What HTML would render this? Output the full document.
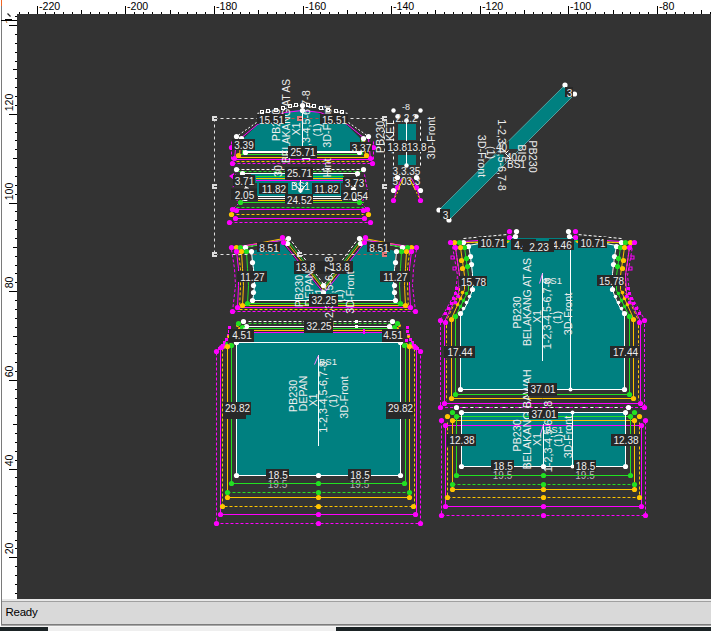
<!DOCTYPE html>
<html><head><meta charset="utf-8"><style>
html,body{margin:0;padding:0;width:711px;height:631px;overflow:hidden;background:#fff;}
.abs{position:absolute;left:0;top:0;}
.rl{font-family:"Liberation Sans",sans-serif;font-size:10.6px;}
.rl2{font-family:"Liberation Sans",sans-serif;font-size:10.6px;}
#cv{position:absolute;left:17px;top:14px;width:694px;height:585px;background:#333333;overflow:hidden;}
#st{position:absolute;left:1px;top:599px;width:710px;height:28px;}
</style></head><body>
<div id="cv"></div>
<svg class="abs" width="711" height="631" viewBox="0 0 711 631"><g stroke="#000" stroke-width="1" shape-rendering="crispEdges"><line x1="19.5" y1="12" x2="19.5" y2="14" /><line x1="28.5" y1="12" x2="28.5" y2="14" /><line x1="37.5" y1="6" x2="37.5" y2="14" /><line x1="45.5" y1="12" x2="45.5" y2="14" /><line x1="54.5" y1="12" x2="54.5" y2="14" /><line x1="63.5" y1="12" x2="63.5" y2="14" /><line x1="72.5" y1="12" x2="72.5" y2="14" /><line x1="81.5" y1="10" x2="81.5" y2="14" /><line x1="90.5" y1="12" x2="90.5" y2="14" /><line x1="99.5" y1="12" x2="99.5" y2="14" /><line x1="108.5" y1="12" x2="108.5" y2="14" /><line x1="116.5" y1="12" x2="116.5" y2="14" /><line x1="125.5" y1="6" x2="125.5" y2="14" /><line x1="134.5" y1="12" x2="134.5" y2="14" /><line x1="143.5" y1="12" x2="143.5" y2="14" /><line x1="152.5" y1="12" x2="152.5" y2="14" /><line x1="161.5" y1="12" x2="161.5" y2="14" /><line x1="170.5" y1="10" x2="170.5" y2="14" /><line x1="178.5" y1="12" x2="178.5" y2="14" /><line x1="187.5" y1="12" x2="187.5" y2="14" /><line x1="196.5" y1="12" x2="196.5" y2="14" /><line x1="205.5" y1="12" x2="205.5" y2="14" /><line x1="214.5" y1="6" x2="214.5" y2="14" /><line x1="223.5" y1="12" x2="223.5" y2="14" /><line x1="232.5" y1="12" x2="232.5" y2="14" /><line x1="240.5" y1="12" x2="240.5" y2="14" /><line x1="249.5" y1="12" x2="249.5" y2="14" /><line x1="258.5" y1="10" x2="258.5" y2="14" /><line x1="267.5" y1="12" x2="267.5" y2="14" /><line x1="276.5" y1="12" x2="276.5" y2="14" /><line x1="285.5" y1="12" x2="285.5" y2="14" /><line x1="294.5" y1="12" x2="294.5" y2="14" /><line x1="303.5" y1="6" x2="303.5" y2="14" /><line x1="311.5" y1="12" x2="311.5" y2="14" /><line x1="320.5" y1="12" x2="320.5" y2="14" /><line x1="329.5" y1="12" x2="329.5" y2="14" /><line x1="338.5" y1="12" x2="338.5" y2="14" /><line x1="347.5" y1="10" x2="347.5" y2="14" /><line x1="356.5" y1="12" x2="356.5" y2="14" /><line x1="365.5" y1="12" x2="365.5" y2="14" /><line x1="373.5" y1="12" x2="373.5" y2="14" /><line x1="382.5" y1="12" x2="382.5" y2="14" /><line x1="391.5" y1="6" x2="391.5" y2="14" /><line x1="400.5" y1="12" x2="400.5" y2="14" /><line x1="409.5" y1="12" x2="409.5" y2="14" /><line x1="418.5" y1="12" x2="418.5" y2="14" /><line x1="427.5" y1="12" x2="427.5" y2="14" /><line x1="435.5" y1="10" x2="435.5" y2="14" /><line x1="444.5" y1="12" x2="444.5" y2="14" /><line x1="453.5" y1="12" x2="453.5" y2="14" /><line x1="462.5" y1="12" x2="462.5" y2="14" /><line x1="471.5" y1="12" x2="471.5" y2="14" /><line x1="480.5" y1="6" x2="480.5" y2="14" /><line x1="489.5" y1="12" x2="489.5" y2="14" /><line x1="498.5" y1="12" x2="498.5" y2="14" /><line x1="506.5" y1="12" x2="506.5" y2="14" /><line x1="515.5" y1="12" x2="515.5" y2="14" /><line x1="524.5" y1="10" x2="524.5" y2="14" /><line x1="533.5" y1="12" x2="533.5" y2="14" /><line x1="542.5" y1="12" x2="542.5" y2="14" /><line x1="551.5" y1="12" x2="551.5" y2="14" /><line x1="560.5" y1="12" x2="560.5" y2="14" /><line x1="568.5" y1="6" x2="568.5" y2="14" /><line x1="577.5" y1="12" x2="577.5" y2="14" /><line x1="586.5" y1="12" x2="586.5" y2="14" /><line x1="595.5" y1="12" x2="595.5" y2="14" /><line x1="604.5" y1="12" x2="604.5" y2="14" /><line x1="613.5" y1="10" x2="613.5" y2="14" /><line x1="622.5" y1="12" x2="622.5" y2="14" /><line x1="630.5" y1="12" x2="630.5" y2="14" /><line x1="639.5" y1="12" x2="639.5" y2="14" /><line x1="648.5" y1="12" x2="648.5" y2="14" /><line x1="657.5" y1="6" x2="657.5" y2="14" /><line x1="666.5" y1="12" x2="666.5" y2="14" /><line x1="675.5" y1="12" x2="675.5" y2="14" /><line x1="684.5" y1="12" x2="684.5" y2="14" /><line x1="693.5" y1="12" x2="693.5" y2="14" /><line x1="701.5" y1="10" x2="701.5" y2="14" /><line x1="710.5" y1="12" x2="710.5" y2="14" /><line x1="15" y1="16.5" x2="17" y2="16.5" /><line x1="9" y1="25.5" x2="17" y2="25.5" /><line x1="15" y1="34.5" x2="17" y2="34.5" /><line x1="15" y1="43.5" x2="17" y2="43.5" /><line x1="15" y1="52.5" x2="17" y2="52.5" /><line x1="15" y1="61.5" x2="17" y2="61.5" /><line x1="13" y1="69.5" x2="17" y2="69.5" /><line x1="15" y1="78.5" x2="17" y2="78.5" /><line x1="15" y1="87.5" x2="17" y2="87.5" /><line x1="15" y1="96.5" x2="17" y2="96.5" /><line x1="15" y1="105.5" x2="17" y2="105.5" /><line x1="9" y1="114.5" x2="17" y2="114.5" /><line x1="15" y1="123.5" x2="17" y2="123.5" /><line x1="15" y1="132.5" x2="17" y2="132.5" /><line x1="15" y1="140.5" x2="17" y2="140.5" /><line x1="15" y1="149.5" x2="17" y2="149.5" /><line x1="13" y1="158.5" x2="17" y2="158.5" /><line x1="15" y1="167.5" x2="17" y2="167.5" /><line x1="15" y1="176.5" x2="17" y2="176.5" /><line x1="15" y1="185.5" x2="17" y2="185.5" /><line x1="15" y1="194.5" x2="17" y2="194.5" /><line x1="9" y1="203.5" x2="17" y2="203.5" /><line x1="15" y1="211.5" x2="17" y2="211.5" /><line x1="15" y1="220.5" x2="17" y2="220.5" /><line x1="15" y1="229.5" x2="17" y2="229.5" /><line x1="15" y1="238.5" x2="17" y2="238.5" /><line x1="13" y1="247.5" x2="17" y2="247.5" /><line x1="15" y1="256.5" x2="17" y2="256.5" /><line x1="15" y1="265.5" x2="17" y2="265.5" /><line x1="15" y1="273.5" x2="17" y2="273.5" /><line x1="15" y1="282.5" x2="17" y2="282.5" /><line x1="9" y1="291.5" x2="17" y2="291.5" /><line x1="15" y1="300.5" x2="17" y2="300.5" /><line x1="15" y1="309.5" x2="17" y2="309.5" /><line x1="15" y1="318.5" x2="17" y2="318.5" /><line x1="15" y1="327.5" x2="17" y2="327.5" /><line x1="13" y1="336.5" x2="17" y2="336.5" /><line x1="15" y1="344.5" x2="17" y2="344.5" /><line x1="15" y1="353.5" x2="17" y2="353.5" /><line x1="15" y1="362.5" x2="17" y2="362.5" /><line x1="15" y1="371.5" x2="17" y2="371.5" /><line x1="9" y1="380.5" x2="17" y2="380.5" /><line x1="15" y1="389.5" x2="17" y2="389.5" /><line x1="15" y1="398.5" x2="17" y2="398.5" /><line x1="15" y1="407.5" x2="17" y2="407.5" /><line x1="15" y1="415.5" x2="17" y2="415.5" /><line x1="13" y1="424.5" x2="17" y2="424.5" /><line x1="15" y1="433.5" x2="17" y2="433.5" /><line x1="15" y1="442.5" x2="17" y2="442.5" /><line x1="15" y1="451.5" x2="17" y2="451.5" /><line x1="15" y1="460.5" x2="17" y2="460.5" /><line x1="9" y1="469.5" x2="17" y2="469.5" /><line x1="15" y1="477.5" x2="17" y2="477.5" /><line x1="15" y1="486.5" x2="17" y2="486.5" /><line x1="15" y1="495.5" x2="17" y2="495.5" /><line x1="15" y1="504.5" x2="17" y2="504.5" /><line x1="13" y1="513.5" x2="17" y2="513.5" /><line x1="15" y1="522.5" x2="17" y2="522.5" /><line x1="15" y1="531.5" x2="17" y2="531.5" /><line x1="15" y1="540.5" x2="17" y2="540.5" /><line x1="15" y1="548.5" x2="17" y2="548.5" /><line x1="9" y1="557.5" x2="17" y2="557.5" /><line x1="15" y1="566.5" x2="17" y2="566.5" /><line x1="15" y1="575.5" x2="17" y2="575.5" /><line x1="15" y1="584.5" x2="17" y2="584.5" /><line x1="15" y1="593.5" x2="17" y2="593.5" /></g><g fill="#000"><text x="39.0" y="10" class="rl">-220</text><text x="127.0" y="10" class="rl">-200</text><text x="216.0" y="10" class="rl">-180</text><text x="305.0" y="10" class="rl">-160</text><text x="393.0" y="10" class="rl">-140</text><text x="482.0" y="10" class="rl">-120</text><text x="570.0" y="10" class="rl">-100</text><text x="659.0" y="10" class="rl">-80</text><text transform="translate(12.6,111.3) rotate(-90)" class="rl2">120</text><text transform="translate(12.6,200.3) rotate(-90)" class="rl2">100</text><text transform="translate(12.6,288.3) rotate(-90)" class="rl2">80</text><text transform="translate(12.6,377.3) rotate(-90)" class="rl2">60</text><text transform="translate(12.6,466.3) rotate(-90)" class="rl2">40</text><text transform="translate(12.6,554.3) rotate(-90)" class="rl2">20</text></g></svg>
<svg class="abs" width="711" height="631" viewBox="0 0 711 631" style="font-family:'Liberation Sans',sans-serif">
<rect x="237" y="333" width="163" height="142" fill="#008080"/>
<text x="277.5" y="488" text-anchor="middle" font-size="10" fill="#b8b8b8">19.5</text>
<text x="359.5" y="488" text-anchor="middle" font-size="10" fill="#b8b8b8">19.5</text>
<polyline points="248.5,321.5 389.5,321.5" fill="none" stroke="#ffffff" stroke-width="1" stroke-dasharray="3 2"/>
<polyline points="248.5,323.5 393.5,323.5" fill="none" stroke="#22e022" stroke-width="1" stroke-dasharray="3 2"/>
<rect x="248" y="326" width="142" height="1" fill="#ffffff"/>
<rect x="248" y="328" width="149" height="1" fill="#22e022"/>
<rect x="252" y="330" width="132" height="1" fill="#ffc400"/>
<rect x="252" y="332" width="132" height="1" fill="#ff00ff"/>
<rect x="236" y="342" width="165" height="1" fill="#ffffff"/>
<polyline points="216.5,352.5 216.5,523.5 420.5,523.5 420.5,352.5" fill="none" stroke="#ff00ff" stroke-width="1" stroke-dasharray="3 2"/>
<rect x="220" y="349" width="1" height="166" fill="#ff00ff"/>
<rect x="416" y="349" width="1" height="166" fill="#ff00ff"/>
<rect x="220" y="514" width="197" height="1" fill="#ff00ff"/>
<polyline points="222.5,348.5 222.5,506.5 414.5,506.5 414.5,348.5" fill="none" stroke="#ffc400" stroke-width="1" stroke-dasharray="3 2"/>
<rect x="227" y="347" width="1" height="151" fill="#ffc400"/>
<rect x="409" y="347" width="1" height="151" fill="#ffc400"/>
<rect x="227" y="497" width="183" height="1" fill="#ffc400"/>
<rect x="231" y="346" width="1" height="138" fill="#22e022"/>
<rect x="405" y="346" width="1" height="138" fill="#22e022"/>
<rect x="231" y="483" width="175" height="1" fill="#22e022"/>
<rect x="236" y="342" width="1" height="134" fill="#ffffff"/>
<rect x="400" y="342" width="1" height="134" fill="#ffffff"/>
<rect x="236" y="475" width="165" height="1" fill="#ffffff"/>
<polyline points="227.5,492.5 409.5,492.5" fill="none" stroke="#22e022" stroke-width="1" stroke-dasharray="3 2"/>
<polyline points="236.5,342.5 247.5,326.5" fill="none" stroke="#ffffff" stroke-width="1"/>
<polyline points="400.5,342.5 389.5,326.5" fill="none" stroke="#ffffff" stroke-width="1"/>
<rect x="406" y="326" width="3" height="3" fill="#ff00ff"/>
<rect x="228" y="326" width="3" height="3" fill="#ff00ff"/>
<rect x="406" y="330" width="3" height="3" fill="#ff00ff"/>
<rect x="228" y="330" width="3" height="3" fill="#ff00ff"/>
<rect x="407" y="334" width="3" height="3" fill="#ff00ff"/>
<rect x="227" y="334" width="3" height="3" fill="#ff00ff"/>
<rect x="409" y="338" width="3" height="3" fill="#ff00ff"/>
<rect x="225" y="338" width="3" height="3" fill="#ff00ff"/>
<rect x="411" y="341" width="3" height="3" fill="#ff00ff"/>
<rect x="223" y="341" width="3" height="3" fill="#ff00ff"/>
<rect x="413" y="344" width="3" height="3" fill="#ff00ff"/>
<rect x="221" y="344" width="3" height="3" fill="#ff00ff"/>
<rect x="416" y="347" width="3" height="3" fill="#ff00ff"/>
<rect x="218" y="347" width="3" height="3" fill="#ff00ff"/>
<rect x="410" y="344" width="3" height="3" fill="#ff00ff"/>
<rect x="224" y="344" width="3" height="3" fill="#ff00ff"/>
<rect x="405" y="339" width="3" height="3" fill="#ff00ff"/>
<rect x="229" y="339" width="3" height="3" fill="#ff00ff"/>
<circle cx="408.5" cy="336.5" r="1.5" fill="#ffc400"/>
<circle cx="228.5" cy="336.5" r="1.5" fill="#ffc400"/>
<circle cx="406.5" cy="344.5" r="1.5" fill="#ffc400"/>
<circle cx="230.5" cy="344.5" r="1.5" fill="#ffc400"/>
<circle cx="410.5" cy="343.5" r="1.5" fill="#22e022"/>
<circle cx="226.5" cy="343.5" r="1.5" fill="#22e022"/>
<circle cx="413.5" cy="347.5" r="1.5" fill="#ffc400"/>
<circle cx="223.5" cy="347.5" r="1.5" fill="#ffc400"/>
<circle cx="399.5" cy="325.5" r="1.5" fill="#ffc400"/>
<circle cx="237.5" cy="325.5" r="1.5" fill="#ffc400"/>
<circle cx="397.5" cy="328.5" r="1.5" fill="#ffc400"/>
<circle cx="239.5" cy="328.5" r="1.5" fill="#ffc400"/>
<circle cx="236.5" cy="475.5" r="2.6" fill="#ffffff"/>
<circle cx="318.5" cy="475.5" r="2.6" fill="#ffffff"/>
<circle cx="400.5" cy="475.5" r="2.6" fill="#ffffff"/>
<circle cx="236.5" cy="342.5" r="2.6" fill="#ffffff"/>
<circle cx="400.5" cy="342.5" r="2.6" fill="#ffffff"/>
<circle cx="231.5" cy="483.5" r="2.6" fill="#22e022"/>
<circle cx="318.5" cy="483.5" r="2.6" fill="#22e022"/>
<circle cx="404.5" cy="483.5" r="2.6" fill="#22e022"/>
<circle cx="227.5" cy="492.5" r="2.6" fill="#22e022"/>
<circle cx="318.5" cy="492.5" r="2.6" fill="#22e022"/>
<circle cx="409.5" cy="492.5" r="2.6" fill="#22e022"/>
<circle cx="227.5" cy="497.5" r="2.6" fill="#ffc400"/>
<circle cx="318.5" cy="497.5" r="2.6" fill="#ffc400"/>
<circle cx="409.5" cy="497.5" r="2.6" fill="#ffc400"/>
<circle cx="222.5" cy="506.5" r="2.6" fill="#ffc400"/>
<circle cx="318.5" cy="506.5" r="2.6" fill="#ffc400"/>
<circle cx="413.5" cy="506.5" r="2.6" fill="#ffc400"/>
<circle cx="220.5" cy="514.5" r="2.6" fill="#ff00ff"/>
<circle cx="318.5" cy="514.5" r="2.6" fill="#ff00ff"/>
<circle cx="415.5" cy="514.5" r="2.6" fill="#ff00ff"/>
<circle cx="216.5" cy="523.5" r="2.6" fill="#ff00ff"/>
<circle cx="318.5" cy="523.5" r="2.6" fill="#ff00ff"/>
<circle cx="420.5" cy="523.5" r="2.6" fill="#ff00ff"/>
<circle cx="243.5" cy="321.5" r="2.6" fill="#ffffff"/>
<circle cx="246.5" cy="326.5" r="2.6" fill="#ffffff"/>
<circle cx="392.5" cy="321.5" r="2.6" fill="#ffffff"/>
<circle cx="389.5" cy="326.5" r="2.6" fill="#ffffff"/>
<circle cx="238.5" cy="323.5" r="2.6" fill="#22e022"/>
<circle cx="397.5" cy="323.5" r="2.6" fill="#22e022"/>
<circle cx="242.5" cy="327.5" r="2.6" fill="#22e022"/>
<circle cx="394.5" cy="327.5" r="2.6" fill="#22e022"/>
<circle cx="231.5" cy="345.5" r="2.6" fill="#22e022"/>
<circle cx="404.5" cy="345.5" r="2.6" fill="#22e022"/>
<circle cx="227.5" cy="346.5" r="2.6" fill="#ffc400"/>
<circle cx="409.5" cy="346.5" r="2.6" fill="#ffc400"/>
<circle cx="216.5" cy="351.5" r="2.6" fill="#ff00ff"/>
<circle cx="420.5" cy="351.5" r="2.6" fill="#ff00ff"/>
<circle cx="221.5" cy="347.5" r="2.6" fill="#ff00ff"/>
<circle cx="415.5" cy="347.5" r="2.6" fill="#ff00ff"/>
<rect x="244" y="328" width="3" height="3" fill="none" stroke="#fff" stroke-width="1"/>
<rect x="238" y="338" width="3" height="3" fill="none" stroke="#fff" stroke-width="1"/>
<rect x="389" y="328" width="3" height="3" fill="none" stroke="#fff" stroke-width="1"/>
<rect x="395" y="338" width="3" height="3" fill="none" stroke="#fff" stroke-width="1"/>
<rect x="355" y="320" width="3" height="3" fill="#ffffff"/>
<rect x="355" y="325" width="3" height="3" fill="#ffffff"/>
<rect x="363" y="329" width="2" height="5" fill="#ff00ff"/>
<rect x="223" y="414" width="23" height="5" fill="#282828"/>
<rect x="386" y="414" width="24" height="5" fill="#282828"/>
<rect x="318" y="355" width="1" height="91" fill="#ffffff"/>
<polyline points="314.5,364.5 318.5,355.5" fill="none" stroke="#ff80ff" stroke-width="1"/>
<text x="319" y="365" text-anchor="start" font-size="9.5" fill="#eeeeee">BS1</text>
<text transform="translate(296.5,396) rotate(-90) scale(1.08,1)" text-anchor="middle" font-size="10" fill="#eeeeee">PB230</text>
<text transform="translate(306.7,393.4) rotate(-90)" text-anchor="middle" font-size="10" fill="#eeeeee" textLength="35.5" lengthAdjust="spacingAndGlyphs">DEPAN</text>
<text transform="translate(316.9,400) rotate(-90) scale(1.08,1)" text-anchor="middle" font-size="10" fill="#eeeeee">X1</text>
<text transform="translate(327.1,397) rotate(-90) scale(1.08,1)" text-anchor="middle" font-size="10" fill="#eeeeee">1-2,3-4,5-6,7-8</text>
<text transform="translate(337.3,401) rotate(-90) scale(1.08,1)" text-anchor="middle" font-size="10" fill="#eeeeee">(1)</text>
<text transform="translate(347.5,397.5) rotate(-90) scale(1.08,1)" text-anchor="middle" font-size="10" fill="#eeeeee">3D-Front</text>
<polygon points="542,238 510,238 490,241 468,245 470,256 472,273 472,289 470,295 467,302 464,308 460,313 460,389 542,389 542,389 624,389 624,313 620,308 617,302 614,295 612,289 612,273 614,256 616,245 594,241 574,238 542,238" fill="#008080"/>
<polyline points="516.5,236.5 507.5,238.5 468.5,245.5 470.5,256.5 472.5,273.5 472.5,289.5 470.5,295.5 467.5,302.5 464.5,308.5 460.5,313.5 460.5,389.5 542.5,389.5 542.5,389.5 624.5,389.5 624.5,313.5 620.5,308.5 617.5,302.5 614.5,295.5 612.5,289.5 612.5,273.5 614.5,256.5 616.5,245.5 577.5,238.5 568.5,236.5" fill="none" stroke="#ffffff" stroke-width="1"/>
<polyline points="509.5,240.5 463.5,242.5 464.5,247.5 468.5,275.5 468.5,290.5 455.5,316.5 455.5,394.5 542.5,394.5 542.5,394.5 629.5,394.5 629.5,316.5 616.5,290.5 616.5,275.5 620.5,247.5 621.5,242.5 575.5,240.5" fill="none" stroke="#22e022" stroke-width="1"/>
<polyline points="509.5,241.5 459.5,242.5 460.5,247.5 464.5,275.5 464.5,289.5 451.5,318.5 451.5,398.5 542.5,398.5 542.5,398.5 633.5,398.5 633.5,318.5 620.5,289.5 620.5,275.5 624.5,247.5 625.5,242.5 575.5,241.5" fill="none" stroke="#ffc400" stroke-width="1"/>
<polyline points="508.5,242.5 454.5,242.5 455.5,247.5 459.5,275.5 459.5,292.5 446.5,320.5 446.5,400.5" fill="none" stroke="#ffc400" stroke-width="1" stroke-dasharray="3 2"/>
<polyline points="576.5,242.5 630.5,242.5 629.5,247.5 625.5,275.5 625.5,292.5 638.5,320.5 638.5,400.5" fill="none" stroke="#ffc400" stroke-width="1" stroke-dasharray="3 2"/>
<polyline points="509.5,238.5 478.5,240.5 450.5,242.5 455.5,247.5 459.5,275.5 458.5,292.5 444.5,321.5 444.5,403.5 542.5,403.5 542.5,403.5 640.5,403.5 640.5,321.5 626.5,292.5 625.5,275.5 629.5,247.5 634.5,242.5 606.5,240.5 575.5,238.5" fill="none" stroke="#ff00ff" stroke-width="1"/>
<polyline points="452.5,246.5 457.5,275.5 455.5,292.5 440.5,319.5 440.5,407.5 542.5,407.5 542.5,407.5 644.5,407.5 644.5,319.5 629.5,292.5 627.5,275.5 632.5,246.5" fill="none" stroke="#ff00ff" stroke-width="1" stroke-dasharray="3 2"/>
<polyline points="462.5,407.5 622.5,407.5" fill="none" stroke="#ffffff" stroke-width="1" stroke-dasharray="3 5"/>
<polyline points="463.5,238.5 507.5,234.5" fill="none" stroke="#ffffff" stroke-width="1" stroke-dasharray="3 2"/>
<polyline points="621.5,238.5 577.5,234.5" fill="none" stroke="#ffffff" stroke-width="1" stroke-dasharray="3 2"/>
<circle cx="463.5" cy="242.5" r="2.6" fill="#ffffff"/>
<circle cx="621.5" cy="242.5" r="2.6" fill="#ffffff"/>
<circle cx="459.5" cy="242.5" r="2.6" fill="#22e022"/>
<circle cx="625.5" cy="242.5" r="2.6" fill="#22e022"/>
<circle cx="454.5" cy="242.5" r="2.6" fill="#ffc400"/>
<circle cx="630.5" cy="242.5" r="2.6" fill="#ffc400"/>
<circle cx="450.5" cy="242.5" r="2.6" fill="#ff00ff"/>
<circle cx="634.5" cy="242.5" r="2.6" fill="#ff00ff"/>
<circle cx="468.5" cy="246.5" r="2.6" fill="#ffffff"/>
<circle cx="616.5" cy="246.5" r="2.6" fill="#ffffff"/>
<circle cx="464.5" cy="247.5" r="2.6" fill="#22e022"/>
<circle cx="620.5" cy="247.5" r="2.6" fill="#22e022"/>
<circle cx="460.5" cy="247.5" r="2.6" fill="#ffc400"/>
<circle cx="624.5" cy="247.5" r="2.6" fill="#ffc400"/>
<circle cx="455.5" cy="247.5" r="2.6" fill="#ff00ff"/>
<circle cx="629.5" cy="247.5" r="2.6" fill="#ff00ff"/>
<circle cx="470.5" cy="256.5" r="2.6" fill="#ffffff"/>
<circle cx="614.5" cy="256.5" r="2.6" fill="#ffffff"/>
<circle cx="471.5" cy="264.5" r="2.6" fill="#ffffff"/>
<circle cx="613.5" cy="264.5" r="2.6" fill="#ffffff"/>
<circle cx="466.5" cy="258.5" r="2.6" fill="#22e022"/>
<circle cx="618.5" cy="258.5" r="2.6" fill="#22e022"/>
<circle cx="467.5" cy="266.5" r="2.6" fill="#22e022"/>
<circle cx="617.5" cy="266.5" r="2.6" fill="#22e022"/>
<circle cx="461.5" cy="260.5" r="2.6" fill="#ffc400"/>
<circle cx="623.5" cy="260.5" r="2.6" fill="#ffc400"/>
<circle cx="462.5" cy="268.5" r="2.6" fill="#ffc400"/>
<circle cx="622.5" cy="268.5" r="2.6" fill="#ffc400"/>
<circle cx="472.5" cy="289.5" r="2.6" fill="#ffffff"/>
<circle cx="612.5" cy="289.5" r="2.6" fill="#ffffff"/>
<circle cx="460.5" cy="313.5" r="2.6" fill="#ffffff"/>
<circle cx="624.5" cy="313.5" r="2.6" fill="#ffffff"/>
<circle cx="455.5" cy="316.5" r="2.6" fill="#22e022"/>
<circle cx="629.5" cy="316.5" r="2.6" fill="#22e022"/>
<circle cx="451.5" cy="319.5" r="2.6" fill="#ffc400"/>
<circle cx="633.5" cy="319.5" r="2.6" fill="#ffc400"/>
<circle cx="445.5" cy="322.5" r="2.6" fill="#ff00ff"/>
<circle cx="639.5" cy="322.5" r="2.6" fill="#ff00ff"/>
<circle cx="440.5" cy="320.5" r="2.6" fill="#ff00ff"/>
<circle cx="644.5" cy="320.5" r="2.6" fill="#ff00ff"/>
<circle cx="460.5" cy="389.5" r="2.6" fill="#ffffff"/>
<circle cx="624.5" cy="389.5" r="2.6" fill="#ffffff"/>
<circle cx="455.5" cy="394.5" r="2.6" fill="#22e022"/>
<circle cx="629.5" cy="394.5" r="2.6" fill="#22e022"/>
<circle cx="451.5" cy="398.5" r="2.6" fill="#ffc400"/>
<circle cx="633.5" cy="398.5" r="2.6" fill="#ffc400"/>
<circle cx="444.5" cy="403.5" r="2.6" fill="#ff00ff"/>
<circle cx="640.5" cy="403.5" r="2.6" fill="#ff00ff"/>
<circle cx="440.5" cy="407.5" r="2.6" fill="#ff00ff"/>
<circle cx="644.5" cy="407.5" r="2.6" fill="#ff00ff"/>
<circle cx="456.5" cy="407.5" r="2.6" fill="#ffffff"/>
<circle cx="628.5" cy="407.5" r="2.6" fill="#ffffff"/>
<circle cx="516.5" cy="231.5" r="2.6" fill="#ffffff"/>
<circle cx="568.5" cy="231.5" r="2.6" fill="#ffffff"/>
<circle cx="515.5" cy="236.5" r="2.6" fill="#ffffff"/>
<circle cx="569.5" cy="236.5" r="2.6" fill="#ffffff"/>
<circle cx="509.5" cy="231.5" r="2.6" fill="#ff00ff"/>
<circle cx="575.5" cy="231.5" r="2.6" fill="#ff00ff"/>
<circle cx="509.5" cy="237.5" r="2.6" fill="#ff00ff"/>
<circle cx="575.5" cy="237.5" r="2.6" fill="#ff00ff"/>
<rect x="451" y="256" width="3" height="3" fill="none" stroke="#ff00ff" stroke-width="1"/>
<rect x="453" y="267" width="3" height="3" fill="none" stroke="#ff00ff" stroke-width="1"/>
<rect x="631" y="256" width="3" height="3" fill="none" stroke="#ff00ff" stroke-width="1"/>
<rect x="629" y="267" width="3" height="3" fill="none" stroke="#ff00ff" stroke-width="1"/>
<rect x="455" y="287" width="3" height="3" fill="#ff00ff"/>
<rect x="627" y="287" width="3" height="3" fill="#ff00ff"/>
<rect x="454" y="292" width="3" height="3" fill="#ff00ff"/>
<rect x="628" y="292" width="3" height="3" fill="#ff00ff"/>
<rect x="452" y="297" width="3" height="3" fill="#ff00ff"/>
<rect x="630" y="297" width="3" height="3" fill="#ff00ff"/>
<rect x="450" y="302" width="3" height="3" fill="#ff00ff"/>
<rect x="632" y="302" width="3" height="3" fill="#ff00ff"/>
<rect x="447" y="307" width="3" height="3" fill="#ff00ff"/>
<rect x="635" y="307" width="3" height="3" fill="#ff00ff"/>
<rect x="444" y="312" width="3" height="3" fill="#ff00ff"/>
<rect x="638" y="312" width="3" height="3" fill="#ff00ff"/>
<circle cx="462.5" cy="292.5" r="1.8" fill="#ffc400"/>
<circle cx="622.5" cy="292.5" r="1.8" fill="#ffc400"/>
<circle cx="460.5" cy="298.5" r="1.8" fill="#ffc400"/>
<circle cx="624.5" cy="298.5" r="1.8" fill="#ffc400"/>
<circle cx="457.5" cy="304.5" r="1.8" fill="#ffc400"/>
<circle cx="627.5" cy="304.5" r="1.8" fill="#ffc400"/>
<circle cx="466.5" cy="293.5" r="1.8" fill="#22e022"/>
<circle cx="618.5" cy="293.5" r="1.8" fill="#22e022"/>
<circle cx="463.5" cy="300.5" r="1.8" fill="#22e022"/>
<circle cx="621.5" cy="300.5" r="1.8" fill="#22e022"/>
<circle cx="460.5" cy="306.5" r="1.8" fill="#22e022"/>
<circle cx="624.5" cy="306.5" r="1.8" fill="#22e022"/>
<circle cx="469.5" cy="296.5" r="1.8" fill="#ffffff"/>
<circle cx="615.5" cy="296.5" r="1.8" fill="#ffffff"/>
<circle cx="466.5" cy="302.5" r="1.8" fill="#ffffff"/>
<circle cx="618.5" cy="302.5" r="1.8" fill="#ffffff"/>
<circle cx="463.5" cy="308.5" r="1.8" fill="#ffffff"/>
<circle cx="621.5" cy="308.5" r="1.8" fill="#ffffff"/>
<circle cx="458.5" cy="296.5" r="1.8" fill="#ff00ff"/>
<circle cx="626.5" cy="296.5" r="1.8" fill="#ff00ff"/>
<circle cx="455.5" cy="302.5" r="1.8" fill="#ff00ff"/>
<circle cx="629.5" cy="302.5" r="1.8" fill="#ff00ff"/>
<rect x="570" y="237" width="1" height="153" fill="#ffffff"/>
<circle cx="570.5" cy="389.5" r="2" fill="#ffffff"/>
<rect x="542" y="273" width="1" height="88" fill="#ffffff"/>
<polyline points="539.5,283.5 542.5,273.5" fill="none" stroke="#ff80ff" stroke-width="1"/>
<text x="544" y="284" text-anchor="start" font-size="9.5" fill="#eeeeee">BS1</text>
<text transform="translate(520.5,312.5) rotate(-90) scale(1.08,1)" text-anchor="middle" font-size="10" fill="#eeeeee">PB230</text>
<text transform="translate(530.7,302.0) rotate(-90)" text-anchor="middle" font-size="10" fill="#eeeeee" textLength="88" lengthAdjust="spacingAndGlyphs">BELAKANG  AT AS</text>
<text transform="translate(540.9,316.5) rotate(-90) scale(1.08,1)" text-anchor="middle" font-size="10" fill="#eeeeee">X1</text>
<text transform="translate(551.1,313.5) rotate(-90) scale(1.08,1)" text-anchor="middle" font-size="10" fill="#eeeeee">1-2,3-4,5-6,7-8</text>
<text transform="translate(561.3,317.5) rotate(-90) scale(1.08,1)" text-anchor="middle" font-size="10" fill="#eeeeee">(1)</text>
<text transform="translate(571.5,314.0) rotate(-90) scale(1.08,1)" text-anchor="middle" font-size="10" fill="#eeeeee">3D-Front</text>
<rect x="462" y="413" width="163" height="53" fill="#008080"/>
<text x="502.5" y="479" text-anchor="middle" font-size="10" fill="#bbbbbb">19.5</text>
<text x="585" y="479" text-anchor="middle" font-size="10" fill="#bbbbbb">19.5</text>
<rect x="461" y="412" width="165" height="1" fill="#ffffff"/>
<rect x="456" y="416" width="175" height="1" fill="#22e022"/>
<rect x="452" y="420" width="183" height="1" fill="#ffc400"/>
<rect x="445" y="425" width="197" height="1" fill="#ff00ff"/>
<polyline points="441.5,420.5 441.5,515.5 645.5,515.5 645.5,420.5" fill="none" stroke="#ff00ff" stroke-width="1" stroke-dasharray="3 2"/>
<rect x="445" y="425" width="1" height="82" fill="#ff00ff"/>
<rect x="641" y="425" width="1" height="82" fill="#ff00ff"/>
<rect x="445" y="506" width="197" height="1" fill="#ff00ff"/>
<polyline points="447.5,422.5 447.5,497.5 639.5,497.5 639.5,422.5" fill="none" stroke="#ffc400" stroke-width="1" stroke-dasharray="3 2"/>
<rect x="452" y="420" width="1" height="70" fill="#ffc400"/>
<rect x="634" y="420" width="1" height="70" fill="#ffc400"/>
<rect x="452" y="489" width="183" height="1" fill="#ffc400"/>
<rect x="456" y="416" width="1" height="60" fill="#22e022"/>
<rect x="630" y="416" width="1" height="60" fill="#22e022"/>
<rect x="456" y="475" width="175" height="1" fill="#22e022"/>
<rect x="461" y="412" width="1" height="55" fill="#ffffff"/>
<rect x="625" y="412" width="1" height="55" fill="#ffffff"/>
<rect x="461" y="466" width="165" height="1" fill="#ffffff"/>
<polyline points="452.5,484.5 634.5,484.5" fill="none" stroke="#22e022" stroke-width="1" stroke-dasharray="3 2"/>
<circle cx="461.5" cy="412.5" r="2.6" fill="#ffffff"/>
<circle cx="625.5" cy="412.5" r="2.6" fill="#ffffff"/>
<circle cx="452.5" cy="412.5" r="2.6" fill="#22e022"/>
<circle cx="634.5" cy="412.5" r="2.6" fill="#22e022"/>
<circle cx="447.5" cy="416.5" r="2.6" fill="#ffc400"/>
<circle cx="639.5" cy="416.5" r="2.6" fill="#ffc400"/>
<circle cx="441.5" cy="420.5" r="2.6" fill="#ff00ff"/>
<circle cx="645.5" cy="420.5" r="2.6" fill="#ff00ff"/>
<circle cx="456.5" cy="416.5" r="2.6" fill="#22e022"/>
<circle cx="630.5" cy="416.5" r="2.6" fill="#22e022"/>
<circle cx="452.5" cy="420.5" r="2.6" fill="#ffc400"/>
<circle cx="634.5" cy="420.5" r="2.6" fill="#ffc400"/>
<circle cx="445.5" cy="425.5" r="2.6" fill="#ff00ff"/>
<circle cx="641.5" cy="425.5" r="2.6" fill="#ff00ff"/>
<circle cx="461.5" cy="466.5" r="2.6" fill="#ffffff"/>
<circle cx="625.5" cy="466.5" r="2.6" fill="#ffffff"/>
<circle cx="456.5" cy="475.5" r="2.6" fill="#22e022"/>
<circle cx="630.5" cy="475.5" r="2.6" fill="#22e022"/>
<circle cx="452.5" cy="484.5" r="2.6" fill="#22e022"/>
<circle cx="634.5" cy="484.5" r="2.6" fill="#22e022"/>
<circle cx="452.5" cy="489.5" r="2.6" fill="#ffc400"/>
<circle cx="634.5" cy="489.5" r="2.6" fill="#ffc400"/>
<circle cx="447.5" cy="497.5" r="2.6" fill="#ffc400"/>
<circle cx="639.5" cy="497.5" r="2.6" fill="#ffc400"/>
<circle cx="445.5" cy="506.5" r="2.6" fill="#ff00ff"/>
<circle cx="641.5" cy="506.5" r="2.6" fill="#ff00ff"/>
<circle cx="441.5" cy="515.5" r="2.6" fill="#ff00ff"/>
<circle cx="645.5" cy="515.5" r="2.6" fill="#ff00ff"/>
<circle cx="543.5" cy="466.5" r="2.6" fill="#ffffff"/>
<circle cx="543.5" cy="475.5" r="2.6" fill="#22e022"/>
<circle cx="543.5" cy="484.5" r="2.6" fill="#22e022"/>
<circle cx="543.5" cy="489.5" r="2.6" fill="#ffc400"/>
<circle cx="543.5" cy="497.5" r="2.6" fill="#ffc400"/>
<circle cx="543.5" cy="506.5" r="2.6" fill="#ff00ff"/>
<circle cx="543.5" cy="515.5" r="2.6" fill="#ff00ff"/>
<rect x="572" y="412" width="1" height="55" fill="#ffffff"/>
<circle cx="572.5" cy="412.5" r="2" fill="#ffffff"/>
<circle cx="572.5" cy="466.5" r="2" fill="#ffffff"/>
<rect x="543" y="424" width="1" height="43" fill="#ffffff"/>
<polyline points="540.5,434.5 543.5,424.5" fill="none" stroke="#ff80ff" stroke-width="1"/>
<text x="545" y="433" text-anchor="start" font-size="9.5" fill="#eeeeee">BS1</text>
<text transform="translate(521.0,435.5) rotate(-90) scale(1.08,1)" text-anchor="middle" font-size="10" fill="#eeeeee">PB230</text>
<text transform="translate(531.2,419.5) rotate(-90)" text-anchor="middle" font-size="10" fill="#eeeeee" textLength="100" lengthAdjust="spacingAndGlyphs">BELAKANG BAWAH</text>
<text transform="translate(541.4,439.5) rotate(-90) scale(1.08,1)" text-anchor="middle" font-size="10" fill="#eeeeee">X1</text>
<text transform="translate(551.6,436.5) rotate(-90) scale(1.08,1)" text-anchor="middle" font-size="10" fill="#eeeeee">1-2,3-4,5-6,7-8</text>
<text transform="translate(561.8,440.5) rotate(-90) scale(1.08,1)" text-anchor="middle" font-size="10" fill="#eeeeee">(1)</text>
<text transform="translate(572.0,437.0) rotate(-90) scale(1.08,1)" text-anchor="middle" font-size="10" fill="#eeeeee">3D-Front</text>
<polygon points="252,251 282,243 323,293 365,243 395,251 395,262 394,268 393,285 394,295 395,300 252,300 253,295 254,285 253,268 252,262" fill="#008080"/>
<polyline points="282.5,241.5 323.5,292.5" fill="none" stroke="#ff00ff" stroke-width="1"/>
<polyline points="365.5,241.5 324.5,292.5" fill="none" stroke="#ff00ff" stroke-width="1"/>
<polyline points="285.0,240.0 323.5,289.25" fill="none" stroke="#ffc400" stroke-width="1"/>
<polyline points="363.0,240.0 324.5,289.25" fill="none" stroke="#ffc400" stroke-width="1"/>
<polyline points="286.7,238.98 323.5,287.04" fill="none" stroke="#22e022" stroke-width="1"/>
<polyline points="361.3,238.98 324.5,287.04" fill="none" stroke="#22e022" stroke-width="1"/>
<polyline points="289.0,237.6 323.5,284.05" fill="none" stroke="#ffffff" stroke-width="1" stroke-dasharray="3 2"/>
<polyline points="359.0,237.6 324.5,284.05" fill="none" stroke="#ffffff" stroke-width="1" stroke-dasharray="3 2"/>
<polyline points="245.5,247.5 288.5,238.5" fill="none" stroke="#ffffff" stroke-width="1" stroke-dasharray="3 2"/>
<polyline points="402.5,247.5 359.5,238.5" fill="none" stroke="#ffffff" stroke-width="1" stroke-dasharray="3 2"/>
<polyline points="236.5,247.5 283.5,238.5" fill="none" stroke="#ffc400" stroke-width="1"/>
<polyline points="411.5,247.5 364.5,238.5" fill="none" stroke="#ffc400" stroke-width="1"/>
<polyline points="240.5,248.5 284.5,239.5" fill="none" stroke="#22e022" stroke-width="1"/>
<polyline points="407.5,248.5 363.5,239.5" fill="none" stroke="#22e022" stroke-width="1"/>
<polyline points="231.5,247.5 281.5,240.5" fill="none" stroke="#ff00ff" stroke-width="1"/>
<polyline points="416.5,247.5 366.5,240.5" fill="none" stroke="#ff00ff" stroke-width="1"/>
<polyline points="251.5,251.5 252.5,262.5 253.5,268.5 254.5,285.5 253.5,295.5 252.5,300.5" fill="none" stroke="#ffffff" stroke-width="1"/>
<polyline points="396.5,251.5 395.5,262.5 394.5,268.5 393.5,285.5 394.5,295.5 395.5,300.5" fill="none" stroke="#ffffff" stroke-width="1"/>
<polyline points="246.5,251.5 247.5,268.5 248.5,285.5 247.5,303.5" fill="none" stroke="#22e022" stroke-width="1"/>
<polyline points="401.5,251.5 400.5,268.5 399.5,285.5 400.5,303.5" fill="none" stroke="#22e022" stroke-width="1"/>
<polyline points="241.5,251.5 242.5,268.5 243.5,285.5 242.5,305.5" fill="none" stroke="#ffc400" stroke-width="1"/>
<polyline points="406.5,251.5 405.5,268.5 404.5,285.5 405.5,305.5" fill="none" stroke="#ffc400" stroke-width="1"/>
<polyline points="236.5,251.5 238.5,268.5 238.5,285.5 237.5,307.5" fill="none" stroke="#ff00ff" stroke-width="1"/>
<polyline points="411.5,251.5 409.5,268.5 409.5,285.5 410.5,307.5" fill="none" stroke="#ff00ff" stroke-width="1"/>
<polyline points="231.5,249.5 234.5,268.5 235.5,285.5 232.5,311.5" fill="none" stroke="#ff00ff" stroke-width="1" stroke-dasharray="3 2"/>
<polyline points="416.5,249.5 413.5,268.5 412.5,285.5 415.5,311.5" fill="none" stroke="#ff00ff" stroke-width="1" stroke-dasharray="3 2"/>
<polyline points="238.5,252.5 240.5,268.5 240.5,285.5 239.5,309.5" fill="none" stroke="#ffc400" stroke-width="1" stroke-dasharray="3 2"/>
<polyline points="409.5,252.5 407.5,268.5 407.5,285.5 408.5,309.5" fill="none" stroke="#ffc400" stroke-width="1" stroke-dasharray="3 2"/>
<rect x="252" y="300" width="144" height="1" fill="#ffffff"/>
<rect x="247" y="303" width="154" height="1" fill="#22e022"/>
<rect x="242" y="305" width="164" height="1" fill="#ffc400"/>
<rect x="237" y="307" width="174" height="1" fill="#ff00ff"/>
<polyline points="239.5,309.5 408.5,309.5" fill="none" stroke="#ffc400" stroke-width="1" stroke-dasharray="3 2"/>
<polyline points="232.5,311.5 415.5,311.5" fill="none" stroke="#ff00ff" stroke-width="1" stroke-dasharray="3 2"/>
<circle cx="231.5" cy="247.5" r="2.6" fill="#ff00ff"/>
<circle cx="416.5" cy="247.5" r="2.6" fill="#ff00ff"/>
<circle cx="236.5" cy="247.5" r="2.6" fill="#ffc400"/>
<circle cx="411.5" cy="247.5" r="2.6" fill="#ffc400"/>
<circle cx="240.5" cy="247.5" r="2.6" fill="#22e022"/>
<circle cx="407.5" cy="247.5" r="2.6" fill="#22e022"/>
<circle cx="245.5" cy="247.5" r="2.6" fill="#ffffff"/>
<circle cx="402.5" cy="247.5" r="2.6" fill="#ffffff"/>
<circle cx="236.5" cy="251.5" r="2.6" fill="#ff00ff"/>
<circle cx="411.5" cy="251.5" r="2.6" fill="#ff00ff"/>
<circle cx="241.5" cy="251.5" r="2.6" fill="#ffc400"/>
<circle cx="406.5" cy="251.5" r="2.6" fill="#ffc400"/>
<circle cx="246.5" cy="251.5" r="2.6" fill="#22e022"/>
<circle cx="401.5" cy="251.5" r="2.6" fill="#22e022"/>
<circle cx="251.5" cy="251.5" r="2.6" fill="#ffffff"/>
<circle cx="396.5" cy="251.5" r="2.6" fill="#ffffff"/>
<circle cx="232.5" cy="311.5" r="2.6" fill="#ff00ff"/>
<circle cx="415.5" cy="311.5" r="2.6" fill="#ff00ff"/>
<circle cx="237.5" cy="307.5" r="2.6" fill="#ff00ff"/>
<circle cx="410.5" cy="307.5" r="2.6" fill="#ff00ff"/>
<circle cx="242.5" cy="305.5" r="2.6" fill="#ffc400"/>
<circle cx="405.5" cy="305.5" r="2.6" fill="#ffc400"/>
<circle cx="247.5" cy="303.5" r="2.6" fill="#22e022"/>
<circle cx="400.5" cy="303.5" r="2.6" fill="#22e022"/>
<circle cx="252.5" cy="300.5" r="2.6" fill="#ffffff"/>
<circle cx="395.5" cy="300.5" r="2.6" fill="#ffffff"/>
<circle cx="253.5" cy="285.5" r="2.6" fill="#ffffff"/>
<circle cx="394.5" cy="285.5" r="2.6" fill="#ffffff"/>
<circle cx="253.5" cy="292.5" r="2.6" fill="#ffffff"/>
<circle cx="394.5" cy="292.5" r="2.6" fill="#ffffff"/>
<circle cx="252.5" cy="262.5" r="2.6" fill="#ffffff"/>
<circle cx="395.5" cy="262.5" r="2.6" fill="#ffffff"/>
<circle cx="288.5" cy="238.5" r="2.6" fill="#ffffff"/>
<circle cx="359.5" cy="238.5" r="2.6" fill="#ffffff"/>
<circle cx="287.5" cy="243.5" r="2.6" fill="#ffffff"/>
<circle cx="360.5" cy="243.5" r="2.6" fill="#ffffff"/>
<circle cx="282.5" cy="237.5" r="2.6" fill="#ff00ff"/>
<circle cx="365.5" cy="237.5" r="2.6" fill="#ff00ff"/>
<circle cx="283.5" cy="242.5" r="2.6" fill="#ff00ff"/>
<circle cx="364.5" cy="242.5" r="2.6" fill="#ff00ff"/>
<circle cx="323.5" cy="285.5" r="2.6" fill="#ffffff"/>
<circle cx="323.5" cy="292.5" r="2.6" fill="#ffffff"/>
<rect x="294" y="261" width="59" height="13" fill="#282828"/>
<text x="305.5" y="271" text-anchor="middle" font-size="10" fill="#eeeeee">13.8</text>
<text x="340" y="271" text-anchor="middle" font-size="10" fill="#eeeeee">13.8</text>
<text transform="translate(302.5,291) rotate(-90) scale(1.08,1)" text-anchor="middle" font-size="10" fill="#eeeeee">PB230</text>
<text transform="translate(312.7,288.4) rotate(-90)" text-anchor="middle" font-size="10" fill="#eeeeee" textLength="35.5" lengthAdjust="spacingAndGlyphs">DEPAN</text>
<text transform="translate(322.9,295) rotate(-90) scale(1.08,1)" text-anchor="middle" font-size="10" fill="#eeeeee">X1</text>
<text transform="translate(333.1,292) rotate(-90) scale(1.08,1)" text-anchor="middle" font-size="10" fill="#eeeeee">1-2,3-4,5-6,7-8</text>
<text transform="translate(343.3,296) rotate(-90) scale(1.08,1)" text-anchor="middle" font-size="10" fill="#eeeeee">(1)</text>
<text transform="translate(353.5,292.5) rotate(-90) scale(1.08,1)" text-anchor="middle" font-size="10" fill="#eeeeee">3D-Front</text>
<polygon points="302,109.5 290,111 284,114 266,118 258,124 244,138 244,151 360,151 360,138 346,124 338,118 320,114 314,111 302,109.5" fill="#008080"/>
<polyline points="302.5,104.5 276.5,110.5 256.5,113.5" fill="none" stroke="#ffffff" stroke-width="1" stroke-dasharray="2 2"/>
<polyline points="302.5,104.5 328.5,110.5 348.5,113.5" fill="none" stroke="#ffffff" stroke-width="1" stroke-dasharray="2 2"/>
<polyline points="256.5,122.5 236.5,136.5" fill="none" stroke="#ffffff" stroke-width="1" stroke-dasharray="2 2"/>
<polyline points="348.5,122.5 368.5,136.5" fill="none" stroke="#ffffff" stroke-width="1" stroke-dasharray="2 2"/>
<polyline points="302.5,110.5 284.5,112.5 257.5,124.5 240.5,138.5" fill="none" stroke="#ff00ff" stroke-width="1"/>
<polyline points="302.5,110.5 320.5,112.5 347.5,124.5 364.5,138.5" fill="none" stroke="#ff00ff" stroke-width="1"/>
<rect x="274.5" y="108.5" width="3" height="3" fill="none" stroke="#fff" stroke-width="1"/>
<rect x="326.5" y="108.5" width="3" height="3" fill="none" stroke="#fff" stroke-width="1"/>
<rect x="281.5" y="106.5" width="3" height="3" fill="none" stroke="#fff" stroke-width="1"/>
<rect x="319.5" y="106.5" width="3" height="3" fill="none" stroke="#fff" stroke-width="1"/>
<rect x="288.5" y="104.5" width="3" height="3" fill="none" stroke="#fff" stroke-width="1"/>
<rect x="312.5" y="104.5" width="3" height="3" fill="none" stroke="#fff" stroke-width="1"/>
<rect x="294.5" y="103.5" width="3" height="3" fill="none" stroke="#fff" stroke-width="1"/>
<rect x="306.5" y="103.5" width="3" height="3" fill="none" stroke="#fff" stroke-width="1"/>
<rect x="266.5" y="109.5" width="3" height="3" fill="none" stroke="#fff" stroke-width="1"/>
<rect x="334.5" y="109.5" width="3" height="3" fill="none" stroke="#fff" stroke-width="1"/>
<rect x="260.5" y="110.5" width="3" height="3" fill="none" stroke="#fff" stroke-width="1"/>
<rect x="340.5" y="110.5" width="3" height="3" fill="none" stroke="#fff" stroke-width="1"/>
<polyline points="241.5,138.5 243.5,151.5 302.5,151.5" fill="none" stroke="#ffffff" stroke-width="1"/>
<polyline points="363.5,138.5 361.5,151.5 302.5,151.5" fill="none" stroke="#ffffff" stroke-width="1"/>
<rect x="245" y="152" width="115" height="1" fill="#ffffff"/>
<rect x="241" y="154" width="122" height="1" fill="#22e022"/>
<rect x="237" y="157" width="131" height="1" fill="#ffc400"/>
<rect x="232" y="159" width="141" height="1" fill="#ff00ff"/>
<polyline points="236.5,161.5 368.5,161.5" fill="none" stroke="#ffc400" stroke-width="1" stroke-dasharray="3 2"/>
<polyline points="232.5,163.5 373.5,163.5" fill="none" stroke="#ff00ff" stroke-width="1" stroke-dasharray="3 2"/>
<polyline points="240.5,137.5 239.5,157.5" fill="none" stroke="#ffc400" stroke-width="1"/>
<polyline points="364.5,137.5 365.5,157.5" fill="none" stroke="#ffc400" stroke-width="1"/>
<polyline points="236.5,138.5 234.5,159.5" fill="none" stroke="#ff00ff" stroke-width="1"/>
<polyline points="368.5,138.5 370.5,159.5" fill="none" stroke="#ff00ff" stroke-width="1"/>
<polyline points="231.5,141.5 231.5,163.5" fill="none" stroke="#ff00ff" stroke-width="1" stroke-dasharray="3 2"/>
<polyline points="373.5,141.5 373.5,163.5" fill="none" stroke="#ff00ff" stroke-width="1" stroke-dasharray="3 2"/>
<polyline points="243.5,139.5 242.5,154.5" fill="none" stroke="#22e022" stroke-width="1"/>
<polyline points="361.5,139.5 362.5,154.5" fill="none" stroke="#22e022" stroke-width="1"/>
<circle cx="236.5" cy="136.5" r="2.6" fill="#ffffff"/>
<circle cx="368.5" cy="136.5" r="2.6" fill="#ffffff"/>
<circle cx="241.5" cy="138.5" r="2.6" fill="#ffffff"/>
<circle cx="363.5" cy="138.5" r="2.6" fill="#ffffff"/>
<circle cx="245.5" cy="152.5" r="2.6" fill="#ffffff"/>
<circle cx="359.5" cy="152.5" r="2.6" fill="#ffffff"/>
<circle cx="231.5" cy="147.5" r="2.6" fill="#ff00ff"/>
<circle cx="373.5" cy="147.5" r="2.6" fill="#ff00ff"/>
<circle cx="234.5" cy="158.5" r="2.6" fill="#ff00ff"/>
<circle cx="370.5" cy="158.5" r="2.6" fill="#ff00ff"/>
<circle cx="232.5" cy="163.5" r="2.6" fill="#ff00ff"/>
<circle cx="372.5" cy="163.5" r="2.6" fill="#ff00ff"/>
<circle cx="238.5" cy="155.5" r="2.6" fill="#ffc400"/>
<circle cx="366.5" cy="155.5" r="2.6" fill="#ffc400"/>
<circle cx="302.5" cy="105.5" r="2.6" fill="#ffffff"/>
<circle cx="302.5" cy="110.5" r="2.6" fill="#ffffff"/>
<rect x="302" y="105" width="1" height="48" fill="#ffffff"/>
<text transform="translate(279.5,125) rotate(-90) scale(1.08,1)" text-anchor="middle" font-size="10" fill="#eeeeee">PB230</text>
<text transform="translate(289.8,121) rotate(-90)" text-anchor="middle" font-size="10" fill="#eeeeee" textLength="84" lengthAdjust="spacingAndGlyphs">BELAKANG  AT AS</text>
<text transform="translate(300.1,129) rotate(-90) scale(1.08,1)" text-anchor="middle" font-size="10" fill="#eeeeee">X1</text>
<text transform="translate(310.4,126) rotate(-90) scale(1.08,1)" text-anchor="middle" font-size="10" fill="#eeeeee">1-2,3-4,5-6,7-8</text>
<text transform="translate(320.7,130) rotate(-90) scale(1.08,1)" text-anchor="middle" font-size="10" fill="#eeeeee">(1)</text>
<text transform="translate(331.0,126.5) rotate(-90) scale(1.08,1)" text-anchor="middle" font-size="10" fill="#eeeeee">3D-Front</text>
<polygon points="251,174 343,174 343,183 341,183 341,196 257,196 257,183 251,183" fill="#008080"/>
<polyline points="236.5,169.5 362.5,169.5" fill="none" stroke="#ffffff" stroke-width="1" stroke-dasharray="3 2"/>
<polyline points="238.5,171.5 362.5,171.5" fill="none" stroke="#22e022" stroke-width="1" stroke-dasharray="3 2"/>
<rect x="242" y="173" width="115" height="1" fill="#ffffff"/>
<rect x="256" y="176" width="88" height="1" fill="#22e022"/>
<rect x="256" y="178" width="88" height="1" fill="#ffc400"/>
<rect x="256" y="180" width="88" height="1" fill="#ff00ff"/>
<rect x="258" y="196" width="84" height="1" fill="#ffffff"/>
<rect x="258" y="198" width="84" height="1" fill="#ffffff"/>
<rect x="258" y="200" width="84" height="1" fill="#ffc400"/>
<rect x="240" y="202" width="124" height="1" fill="#22e022"/>
<polyline points="236.5,207.5 363.5,207.5" fill="none" stroke="#22e022" stroke-width="1" stroke-dasharray="3 2"/>
<rect x="232" y="209" width="136" height="1" fill="#ff00ff"/>
<polyline points="236.5,214.5 363.5,214.5" fill="none" stroke="#ffc400" stroke-width="1" stroke-dasharray="3 2"/>
<rect x="235" y="218" width="130" height="1" fill="#ff00ff"/>
<polyline points="229.5,222.5 369.5,222.5" fill="none" stroke="#ff00ff" stroke-width="1" stroke-dasharray="3 2"/>
<polyline points="236.5,169.5 232.5,190.5 238.5,203.5 232.5,209.5" fill="none" stroke="#ff00ff" stroke-width="1" stroke-dasharray="3 2"/>
<polyline points="363.5,169.5 367.5,190.5 361.5,203.5 367.5,209.5" fill="none" stroke="#ff00ff" stroke-width="1" stroke-dasharray="3 2"/>
<polyline points="242.5,173.5 246.5,189.5 245.5,198.5 240.5,202.5" fill="none" stroke="#ffffff" stroke-width="1"/>
<polyline points="357.5,173.5 353.5,189.5 354.5,198.5 359.5,202.5" fill="none" stroke="#ffffff" stroke-width="1"/>
<circle cx="236.5" cy="169.5" r="2.6" fill="#ffffff"/>
<circle cx="363.5" cy="169.5" r="2.6" fill="#ffffff"/>
<circle cx="242.5" cy="173.5" r="2.6" fill="#ffffff"/>
<circle cx="357.5" cy="173.5" r="2.6" fill="#ffffff"/>
<circle cx="246.5" cy="189.5" r="2.6" fill="#ffffff"/>
<circle cx="353.5" cy="189.5" r="2.6" fill="#ffffff"/>
<circle cx="245.5" cy="198.5" r="2.6" fill="#ffffff"/>
<circle cx="354.5" cy="198.5" r="2.6" fill="#ffffff"/>
<circle cx="240.5" cy="202.5" r="2.6" fill="#22e022"/>
<circle cx="359.5" cy="202.5" r="2.6" fill="#22e022"/>
<circle cx="232.5" cy="209.5" r="2.6" fill="#ff00ff"/>
<circle cx="367.5" cy="209.5" r="2.6" fill="#ff00ff"/>
<circle cx="236.5" cy="210.5" r="2.6" fill="#ff00ff"/>
<circle cx="363.5" cy="210.5" r="2.6" fill="#ff00ff"/>
<circle cx="235.5" cy="218.5" r="2.6" fill="#ff00ff"/>
<circle cx="364.5" cy="218.5" r="2.6" fill="#ff00ff"/>
<circle cx="229.5" cy="222.5" r="2.6" fill="#ff00ff"/>
<circle cx="370.5" cy="222.5" r="2.6" fill="#ff00ff"/>
<circle cx="231.5" cy="214.5" r="2.6" fill="#ffc400"/>
<circle cx="368.5" cy="214.5" r="2.6" fill="#ffc400"/>
<polygon points="229,176 234,173 234,180" fill="#ff00ff"/>
<rect x="300" y="173" width="1" height="20" fill="#ffffff"/>
<text transform="translate(282,171) rotate(-90) scale(1.08,1)" text-anchor="middle" font-size="10" fill="#eeeeee">30</text>
<text transform="translate(331,168) rotate(-90) scale(1.08,1)" text-anchor="middle" font-size="10" fill="#eeeeee">Hint</text>
<text x="291" y="190" font-size="10" fill="#eeeeee">BS1</text>
<polyline points="293.5,182.5 300.5,190.5 307.5,183.5" fill="none" stroke="#ffffff" stroke-width="1"/>
<circle cx="300.5" cy="190.5" r="2.2" fill="#ffffff"/>
<rect x="398" y="124" width="18" height="16" fill="#008080"/>
<rect x="398" y="155" width="18" height="10" fill="#008080"/>
<rect x="406" y="120" width="1" height="46" fill="#ffffff"/>
<polyline points="393.5,120.5 393.5,165.5" fill="none" stroke="#ffffff" stroke-width="1" stroke-dasharray="3 3"/>
<polyline points="420.5,120.5 420.5,165.5" fill="none" stroke="#ffffff" stroke-width="1" stroke-dasharray="3 3"/>
<circle cx="393.5" cy="110.5" r="2.2" fill="#ffffff"/>
<circle cx="420.5" cy="110.5" r="2.2" fill="#ffffff"/>
<circle cx="397.5" cy="116.5" r="2.2" fill="#ffffff"/>
<circle cx="416.5" cy="116.5" r="2.2" fill="#ffffff"/>
<circle cx="406.5" cy="120.5" r="2.2" fill="#ffffff"/>
<circle cx="406.5" cy="165.5" r="2.2" fill="#ffffff"/>
<text x="406.5" y="121.5" text-anchor="middle" font-size="10" fill="#eeeeee">2.2.2</text>
<text x="406.5" y="175" text-anchor="middle" font-size="10" fill="#eeeeee">3.3.35</text>
<text x="406.5" y="185" text-anchor="middle" font-size="10" fill="#eeeeee">5.03.3</text>
<circle cx="397.5" cy="177.5" r="2.6" fill="#ffffff"/>
<circle cx="416.5" cy="177.5" r="2.6" fill="#ffffff"/>
<circle cx="397.5" cy="187.5" r="2.6" fill="#ff00ff"/>
<circle cx="416.5" cy="187.5" r="2.6" fill="#ff00ff"/>
<circle cx="393.5" cy="190.5" r="2.6" fill="#ffffff"/>
<circle cx="420.5" cy="190.5" r="2.6" fill="#ffffff"/>
<circle cx="393.5" cy="200.5" r="2.6" fill="#ff00ff"/>
<circle cx="420.5" cy="200.5" r="2.6" fill="#ff00ff"/>
<polyline points="397.5,187.5 393.5,200.5" fill="none" stroke="#ff00ff" stroke-width="1"/>
<polyline points="416.5,187.5 420.5,200.5" fill="none" stroke="#ff00ff" stroke-width="1"/>
<polyline points="399.5,188.5 394.5,198.5" fill="none" stroke="#ffc400" stroke-width="1" stroke-dasharray="2 2"/>
<polyline points="414.5,188.5 419.5,198.5" fill="none" stroke="#ffc400" stroke-width="1" stroke-dasharray="2 2"/>
<polyline points="401.5,178.5 397.5,187.5" fill="none" stroke="#ff00ff" stroke-width="1"/>
<polyline points="411.5,178.5 416.5,187.5" fill="none" stroke="#ff00ff" stroke-width="1"/>
<polyline points="403.5,178.5 398.5,188.5" fill="none" stroke="#ffc400" stroke-width="1"/>
<polyline points="409.5,178.5 414.5,188.5" fill="none" stroke="#ffc400" stroke-width="1"/>
<text transform="translate(383.5,137) rotate(-90) scale(1.08,1)" text-anchor="middle" font-size="10" fill="#eeeeee">PB230</text>
<text transform="translate(393.7,137) rotate(-90) scale(1.08,1)" text-anchor="middle" font-size="10" fill="#eeeeee">JAKET</text>
<text transform="translate(435.0,138) rotate(-90) scale(1.08,1)" text-anchor="middle" font-size="10" fill="#eeeeee">3D-Front</text>
<text x="402" y="110" text-anchor="start" font-size="9" fill="#eeeeee">-8</text>
<polygon points="565,85 575,94 449,220 439,210" fill="#008080" stroke="#5fb0b0" stroke-width="0.8"/>
<polygon points="509,140.6 509,149 519.5,149 503.6,164.9 503.6,154.4 495,154.4" fill="#333333"/>
<circle cx="565" cy="85" r="2.6" fill="#fff"/>
<circle cx="574.5" cy="94" r="2.6" fill="#fff"/>
<circle cx="439" cy="210" r="2.6" fill="#fff"/>
<circle cx="449" cy="220" r="2.6" fill="#fff"/>
<text transform="translate(528.5,156.5) rotate(90) scale(1.08,1)" text-anchor="middle" font-size="10" fill="#eeeeee">PB230</text>
<text transform="translate(517.5,153) rotate(90) scale(1.08,1)" text-anchor="middle" font-size="10" fill="#eeeeee">BIS</text>
<text transform="translate(497.5,155) rotate(90) scale(1.08,1)" text-anchor="middle" font-size="10" fill="#eeeeee">1-2,3-4,5-6,7-8</text>
<text transform="translate(486.5,152.5) rotate(90) scale(1.08,1)" text-anchor="middle" font-size="10" fill="#eeeeee">(1)</text>
<text transform="translate(478.2,156) rotate(90) scale(1.08,1)" text-anchor="middle" font-size="10" fill="#eeeeee">3D-Front</text>
<text x="496" y="151" text-anchor="start" font-size="10" fill="#eeeeee">40</text>
<text x="506" y="160.5" text-anchor="start" font-size="10" fill="#eeeeee">40</text>
<text x="507" y="167.5" text-anchor="start" font-size="10" fill="#eeeeee">BS1</text>
<polyline points="508.5,150.5 505.5,153.5 510.5,158.5" fill="none" stroke="#ffffff" stroke-width="1"/>
<polyline points="384.5,118.5 384.5,254.5" fill="none" stroke="#e0e0e0" stroke-width="1" stroke-dasharray="3 3"/>
<polyline points="214.5,118.5 214.5,254.5" fill="none" stroke="#e0e0e0" stroke-width="1" stroke-dasharray="3 3"/>
<polyline points="214.5,118.5 285.5,118.5" fill="none" stroke="#e0e0e0" stroke-width="1" stroke-dasharray="3 3"/>
<polyline points="285.5,118.5 320.5,118.5" fill="none" stroke="#b0504a" stroke-width="1" stroke-dasharray="3 3"/>
<polyline points="320.5,118.5 384.5,118.5" fill="none" stroke="#e0e0e0" stroke-width="1" stroke-dasharray="3 3"/>
<polyline points="214.5,254.5 252.5,254.5" fill="none" stroke="#e0e0e0" stroke-width="1" stroke-dasharray="3 3"/>
<polyline points="253.5,254.5 290.5,254.5" fill="none" stroke="#b0504a" stroke-width="1" stroke-dasharray="3 3"/>
<polyline points="291.5,254.5 356.5,254.5" fill="none" stroke="#e0e0e0" stroke-width="1" stroke-dasharray="3 3"/>
<polyline points="357.5,254.5 384.5,254.5" fill="none" stroke="#b0504a" stroke-width="1" stroke-dasharray="3 3"/>
<rect x="212" y="116" width="5" height="5" fill="#dcdcdc"/>
<rect x="214" y="118" width="3" height="1" fill="#333"/>
<rect x="212" y="184" width="5" height="5" fill="#dcdcdc"/>
<rect x="214" y="186" width="3" height="1" fill="#333"/>
<rect x="212" y="252" width="5" height="5" fill="#dcdcdc"/>
<rect x="214" y="254" width="3" height="1" fill="#333"/>
<rect x="382" y="116" width="5" height="5" fill="#dcdcdc"/>
<rect x="384" y="118" width="3" height="1" fill="#333"/>
<rect x="382" y="184" width="5" height="5" fill="#dcdcdc"/>
<rect x="384" y="186" width="3" height="1" fill="#333"/>
<rect x="297" y="252" width="5" height="5" fill="#dcdcdc"/>
<rect x="299" y="254" width="3" height="1" fill="#333"/>
<rect x="297" y="116" width="5" height="5" fill="#e07878"/>
<rect x="299" y="118" width="3" height="1" fill="#333"/>
<rect x="382" y="252" width="5" height="5" fill="#e07878"/>
<rect x="384" y="254" width="3" height="1" fill="#333"/>
<rect x="229" y="329" width="25" height="13" fill="#282828"/>
<text x="242.0" y="339" text-anchor="middle" font-size="10" fill="#eeeeee">4.51</text>
<rect x="382" y="329" width="21" height="13" fill="#282828"/>
<text x="393.0" y="339" text-anchor="middle" font-size="10" fill="#eeeeee">4.51</text>
<rect x="304" y="320" width="29" height="13" fill="#282828"/>
<text x="319.0" y="330" text-anchor="middle" font-size="10" fill="#eeeeee">32.25</text>
<rect x="266" y="469" width="23" height="11" fill="#282828"/>
<text x="278.0" y="479" text-anchor="middle" font-size="10" fill="#eeeeee">18.5</text>
<rect x="348" y="469" width="23" height="11" fill="#282828"/>
<text x="360.0" y="479" text-anchor="middle" font-size="10" fill="#eeeeee">18.5</text>
<rect x="223" y="402" width="28" height="13" fill="#282828"/>
<text x="237.5" y="412" text-anchor="middle" font-size="10" fill="#eeeeee">29.82</text>
<rect x="386" y="402" width="28" height="13" fill="#282828"/>
<text x="400.5" y="412" text-anchor="middle" font-size="10" fill="#eeeeee">29.82</text>
<rect x="478" y="237" width="29" height="11" fill="#282828"/>
<text x="493.0" y="247" text-anchor="middle" font-size="10" fill="#eeeeee">10.71</text>
<rect x="578" y="237" width="29" height="11" fill="#282828"/>
<text x="593.0" y="247" text-anchor="middle" font-size="10" fill="#eeeeee">10.71</text>
<rect x="511" y="239" width="25" height="11" fill="#282828"/>
<text x="524.0" y="249" text-anchor="middle" font-size="10" fill="#eeeeee">4.43</text>
<rect x="549" y="239" width="25" height="11" fill="#282828"/>
<text x="562.0" y="249" text-anchor="middle" font-size="10" fill="#eeeeee">4.46</text>
<rect x="523" y="241" width="31" height="11" fill="#282828"/>
<text x="539.0" y="251" text-anchor="middle" font-size="10" fill="#eeeeee">2.23</text>
<rect x="459" y="276" width="28" height="10" fill="#282828"/>
<text x="473.5" y="286" text-anchor="middle" font-size="10" fill="#eeeeee">15.78</text>
<rect x="597" y="275" width="28" height="11" fill="#282828"/>
<text x="611.5" y="285" text-anchor="middle" font-size="10" fill="#eeeeee">15.78</text>
<rect x="444" y="346" width="31" height="12" fill="#282828"/>
<text x="460.0" y="356" text-anchor="middle" font-size="10" fill="#eeeeee">17.44</text>
<rect x="610" y="346" width="30" height="12" fill="#282828"/>
<text x="625.5" y="356" text-anchor="middle" font-size="10" fill="#eeeeee">17.44</text>
<rect x="528" y="383" width="29" height="13" fill="#282828"/>
<text x="543.0" y="393" text-anchor="middle" font-size="10" fill="#eeeeee">37.01</text>
<rect x="447" y="434" width="29" height="12" fill="#282828"/>
<text x="462.0" y="444" text-anchor="middle" font-size="10" fill="#eeeeee">12.38</text>
<rect x="611" y="434" width="29" height="12" fill="#282828"/>
<text x="626.0" y="444" text-anchor="middle" font-size="10" fill="#eeeeee">12.38</text>
<rect x="491" y="460" width="23" height="11" fill="#282828"/>
<text x="503.0" y="470" text-anchor="middle" font-size="10" fill="#eeeeee">18.5</text>
<rect x="574" y="460" width="22" height="11" fill="#282828"/>
<text x="585.5" y="470" text-anchor="middle" font-size="10" fill="#eeeeee">18.5</text>
<rect x="529" y="408" width="29" height="11" fill="#282828"/>
<text x="544.0" y="418" text-anchor="middle" font-size="10" fill="#eeeeee">37.01</text>
<rect x="257" y="242" width="23" height="10" fill="#282828"/>
<text x="269.0" y="252" text-anchor="middle" font-size="10" fill="#eeeeee">8.51</text>
<rect x="367" y="242" width="23" height="10" fill="#282828"/>
<text x="379.0" y="252" text-anchor="middle" font-size="10" fill="#eeeeee">8.51</text>
<rect x="237" y="271" width="30" height="11" fill="#282828"/>
<text x="252.5" y="281" text-anchor="middle" font-size="10" fill="#eeeeee">11.27</text>
<rect x="380" y="271" width="30" height="11" fill="#282828"/>
<text x="395.5" y="281" text-anchor="middle" font-size="10" fill="#eeeeee">11.27</text>
<rect x="309" y="294" width="29" height="12" fill="#282828"/>
<text x="324.0" y="304" text-anchor="middle" font-size="10" fill="#eeeeee">32.25</text>
<rect x="257" y="114" width="28" height="10" fill="#282828"/>
<text x="271.5" y="124" text-anchor="middle" font-size="10" fill="#eeeeee">15.51</text>
<rect x="320" y="114" width="28" height="10" fill="#282828"/>
<text x="334.5" y="124" text-anchor="middle" font-size="10" fill="#eeeeee">15.51</text>
<rect x="232" y="139" width="23" height="11" fill="#282828"/>
<text x="244.0" y="149" text-anchor="middle" font-size="10" fill="#eeeeee">3.39</text>
<rect x="350" y="142" width="22" height="9" fill="#282828"/>
<text x="361.5" y="152" text-anchor="middle" font-size="10" fill="#eeeeee">3.37</text>
<rect x="288" y="146" width="29" height="12" fill="#282828"/>
<text x="303.0" y="156" text-anchor="middle" font-size="10" fill="#eeeeee">25.71</text>
<rect x="233" y="175" width="22" height="11" fill="#282828"/>
<text x="244.5" y="185" text-anchor="middle" font-size="10" fill="#eeeeee">3.71</text>
<rect x="343" y="177" width="22" height="8" fill="#282828"/>
<text x="354.5" y="187" text-anchor="middle" font-size="10" fill="#eeeeee">3.73</text>
<rect x="259" y="183" width="29" height="11" fill="#282828"/>
<text x="274.0" y="193" text-anchor="middle" font-size="10" fill="#eeeeee">11.82</text>
<rect x="312" y="183" width="28" height="11" fill="#282828"/>
<text x="326.5" y="193" text-anchor="middle" font-size="10" fill="#eeeeee">11.82</text>
<rect x="231" y="188.5" width="26" height="11.5" fill="#282828"/>
<text x="244.5" y="198.5" text-anchor="middle" font-size="10" fill="#eeeeee">2.05</text>
<rect x="341" y="190" width="28" height="9" fill="#282828"/>
<text x="355.5" y="200" text-anchor="middle" font-size="10" fill="#eeeeee">2.054</text>
<rect x="285" y="194" width="28" height="10" fill="#282828"/>
<text x="299.5" y="204" text-anchor="middle" font-size="10" fill="#eeeeee">24.52</text>
<rect x="285" y="167" width="28" height="13" fill="#282828"/>
<text x="299.5" y="177" text-anchor="middle" font-size="10" fill="#eeeeee">25.71</text>
<rect x="385" y="141" width="43" height="11" fill="#282828"/>
<text x="407.0" y="151" text-anchor="middle" font-size="10" fill="#eeeeee">13.813.8</text>
<rect x="565" y="87" width="8" height="10" fill="#282828"/>
<text x="569.5" y="97" text-anchor="middle" font-size="10" fill="#eeeeee">3</text>
<rect x="440" y="209" width="10" height="10" fill="#282828"/>
<text x="445.5" y="219" text-anchor="middle" font-size="10" fill="#eeeeee">3</text>
</svg>
<div class="abs" style="left:1px;top:6px;width:1px;height:621px;background:#7a7a7a"></div>
<div class="abs" style="left:1px;top:0;width:1px;height:6px;background:#f26522"></div>
<div class="abs" style="left:1px;top:20px;width:16px;height:1px;background:#000"></div>
<div class="abs" style="left:5px;top:19px;width:7px;height:2px;background:#000"></div>
<svg class="abs" width="20" height="30"><path d="M7.5 13.5 L10.5 16.5" stroke="#222" stroke-width="1.3"/><path d="M6 21 L7 23" stroke="#c08040" stroke-width="1"/></svg>
<div class="abs" style="left:2px;top:599px;width:709px;height:2px;background:#e8e8e8"></div>
<div class="abs" style="left:2px;top:601px;width:709px;height:1px;background:#a0a0a0"></div>
<div class="abs" style="left:2px;top:602px;width:709px;height:22px;background:#d9d9d9"></div>
<div class="abs" style="left:1px;top:624px;width:710px;height:1px;background:#7c7c7c"></div>
<div class="abs" style="left:1px;top:625px;width:710px;height:1px;background:#a8a8a8"></div>
<div class="abs" style="left:0;top:626px;width:711px;height:1px;background:#f5f5f5"></div>
<div class="abs" style="left:0;top:627px;width:711px;height:4px;background:#1b2325"></div>
<div class="abs" style="left:48px;top:627px;width:288px;height:4px;background:#efefef"></div>
<div class="abs" style="left:5.5px;top:605px;font-family:'Liberation Sans',sans-serif;font-size:11.5px;letter-spacing:-0.25px;line-height:14px;color:#000">Ready</div>
</body></html>
